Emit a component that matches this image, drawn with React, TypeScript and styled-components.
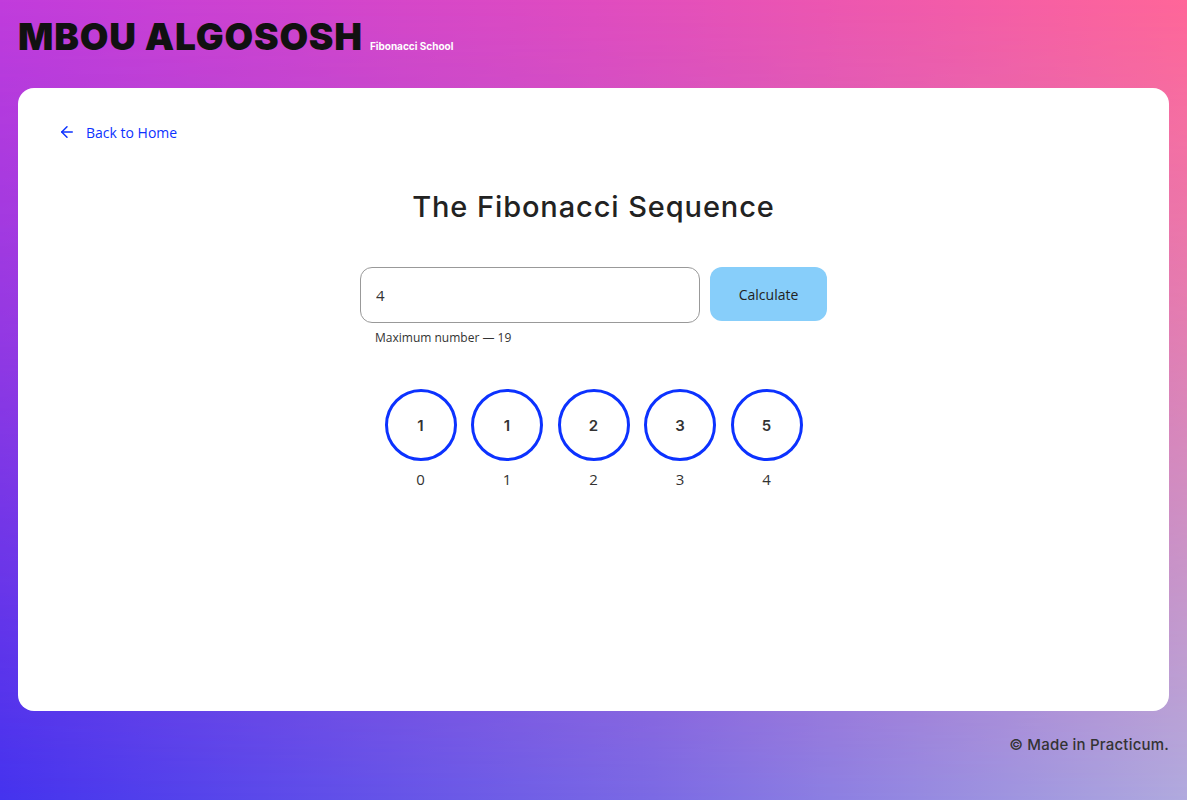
import React, { useState } from "react";
import styled, { createGlobalStyle } from "styled-components";
import { ArrowLeft } from "lucide-react";

const fib = (n: number): number[] => {
  const res = [1, 1];
  for (let i = 2; i <= n; i++) res.push(res[i - 1] + res[i - 2]);
  return res.slice(0, n + 1);
};

// Fibonacci page of the algososh app
const App: React.FC = () => {
  const [value, setValue] = useState("4");
  const items = fib(Number(value) || 0);

  return (
    <Page>
      <GlobalStyle />
      <Header>
        <Logo>MBOU ALGOSOSH</Logo>
        <Subtitle>Fibonacci School</Subtitle>
      </Header>

      <Card>
        <BackLink href="#">
          <ArrowLeft size={18} strokeWidth={2} />
          <span>Back to Home</span>
        </BackLink>

        <Title>The Fibonacci Sequence</Title>

        <Form onSubmit={(e) => e.preventDefault()}>
          <InputWrap>
            <Input value={value} onChange={(e) => setValue(e.target.value)} />
            <Hint>Maximum number — 19</Hint>
          </InputWrap>
          <Button type="submit">Calculate</Button>
        </Form>

        <Circles>
          {items.map((num, i) => (
            <CircleItem key={i}>
              <Circle>{num}</Circle>
              <Index>{i}</Index>
            </CircleItem>
          ))}
        </Circles>
      </Card>

      <Footer>© Made in Practicum.</Footer>
    </Page>
  );
};

export default App;

// Styles
const GlobalStyle = createGlobalStyle`
  html, body {
    margin: 0;
    padding: 0;
  }
  * {
    box-sizing: border-box;
  }
`;

const Page = styled.div`
  position: relative;
  min-height: 100vh;
  padding: 0 18px;
  display: flex;
  flex-direction: column;
  background: linear-gradient(to right, #c13cdc 0%, #e04cc0 50%, #ff6699 100%);
  isolation: isolate;

  &::before {
    content: "";
    position: absolute;
    inset: 0;
    z-index: -1;
    background: linear-gradient(to right, #4433ee 0%, #7a6ae4 55%, #b0aade 100%);
    -webkit-mask-image: linear-gradient(to bottom, transparent 0%, rgba(0, 0, 0, 0.35) 40%, #000 100%);
    mask-image: linear-gradient(to bottom, transparent 0%, rgba(0, 0, 0, 0.35) 40%, #000 100%);
  }
`;

const Header = styled.header`
  height: 88px;
  display: flex;
  align-items: baseline;
  padding-top: 14px;
  gap: 7px;
`;

const Logo = styled.h1`
  margin: 0;
  font-family: Inter, "Liberation Sans", sans-serif;
  font-weight: 900;
  font-size: 37px;
  letter-spacing: 0.8px;
  color: #111;
`;

const Subtitle = styled.span`
  font-family: Inter, "Liberation Sans", sans-serif;
  font-weight: 700;
  font-size: 10px;
  color: #fff;
`;

const Card = styled.main`
  height: 623px;
  background: #fff;
  border-radius: 16px;
  padding: 34px 40px 22px;
  display: flex;
  flex-direction: column;
  align-items: center;
`;

const BackLink = styled.a`
  align-self: flex-start;
  display: flex;
  align-items: center;
  gap: 10px;
  color: #0c32ff;
  text-decoration: none;
  font-family: "Open Sans", sans-serif;
  font-size: 14px;
  font-weight: 500;
  height: 20px;
`;

const Title = styled.h2`
  margin: 47px 0 0;
  font-family: Inter, "Liberation Sans", sans-serif;
  font-weight: 500;
  font-size: 29px;
  letter-spacing: 0.9px;
  line-height: 36px;
  color: #222;
`;

const Form = styled.form`
  margin-top: 42px;
  display: flex;
  gap: 10px;
  align-items: flex-start;
`;

const InputWrap = styled.div`
  display: flex;
  flex-direction: column;
`;

const Input = styled.input`
  width: 340px;
  height: 56px;
  border: 1px solid #999;
  border-radius: 12px;
  padding: 0 15px;
  font-family: "Open Sans", sans-serif;
  font-size: 15px;
  color: #333;
  outline: none;
`;

const Hint = styled.span`
  margin-top: 6px;
  padding-left: 15px;
  font-family: "Open Sans", sans-serif;
  font-size: 12px;
  color: #333;
`;

const Button = styled.button`
  width: 117px;
  height: 54px;
  border: none;
  border-radius: 12px;
  background: #87cefa;
  font-family: "Open Sans", sans-serif;
  font-size: 14px;
  font-weight: 500;
  color: #222;
  cursor: pointer;
`;

const Circles = styled.div`
  margin-top: 43px;
  display: flex;
  gap: 14.5px;
`;

const CircleItem = styled.div`
  display: flex;
  flex-direction: column;
  align-items: center;
  gap: 8px;
`;

const Circle = styled.div`
  width: 72px;
  height: 72px;
  border-radius: 50%;
  border: 3px solid #0c32ff;
  display: flex;
  align-items: center;
  justify-content: center;
  font-family: Inter, "Liberation Sans", sans-serif;
  font-weight: 600;
  font-size: 15px;
  color: #333;
`;

const Index = styled.span`
  font-family: "Open Sans", sans-serif;
  font-size: 15px;
  font-weight: 400;
  color: #333;
`;

const Footer = styled.footer`
  align-self: flex-end;
  margin-top: 24px;
  font-family: Inter, "Liberation Sans", sans-serif;
  font-weight: 500;
  font-size: 15px;
  letter-spacing: 0.2px;
  color: #333;
`;
